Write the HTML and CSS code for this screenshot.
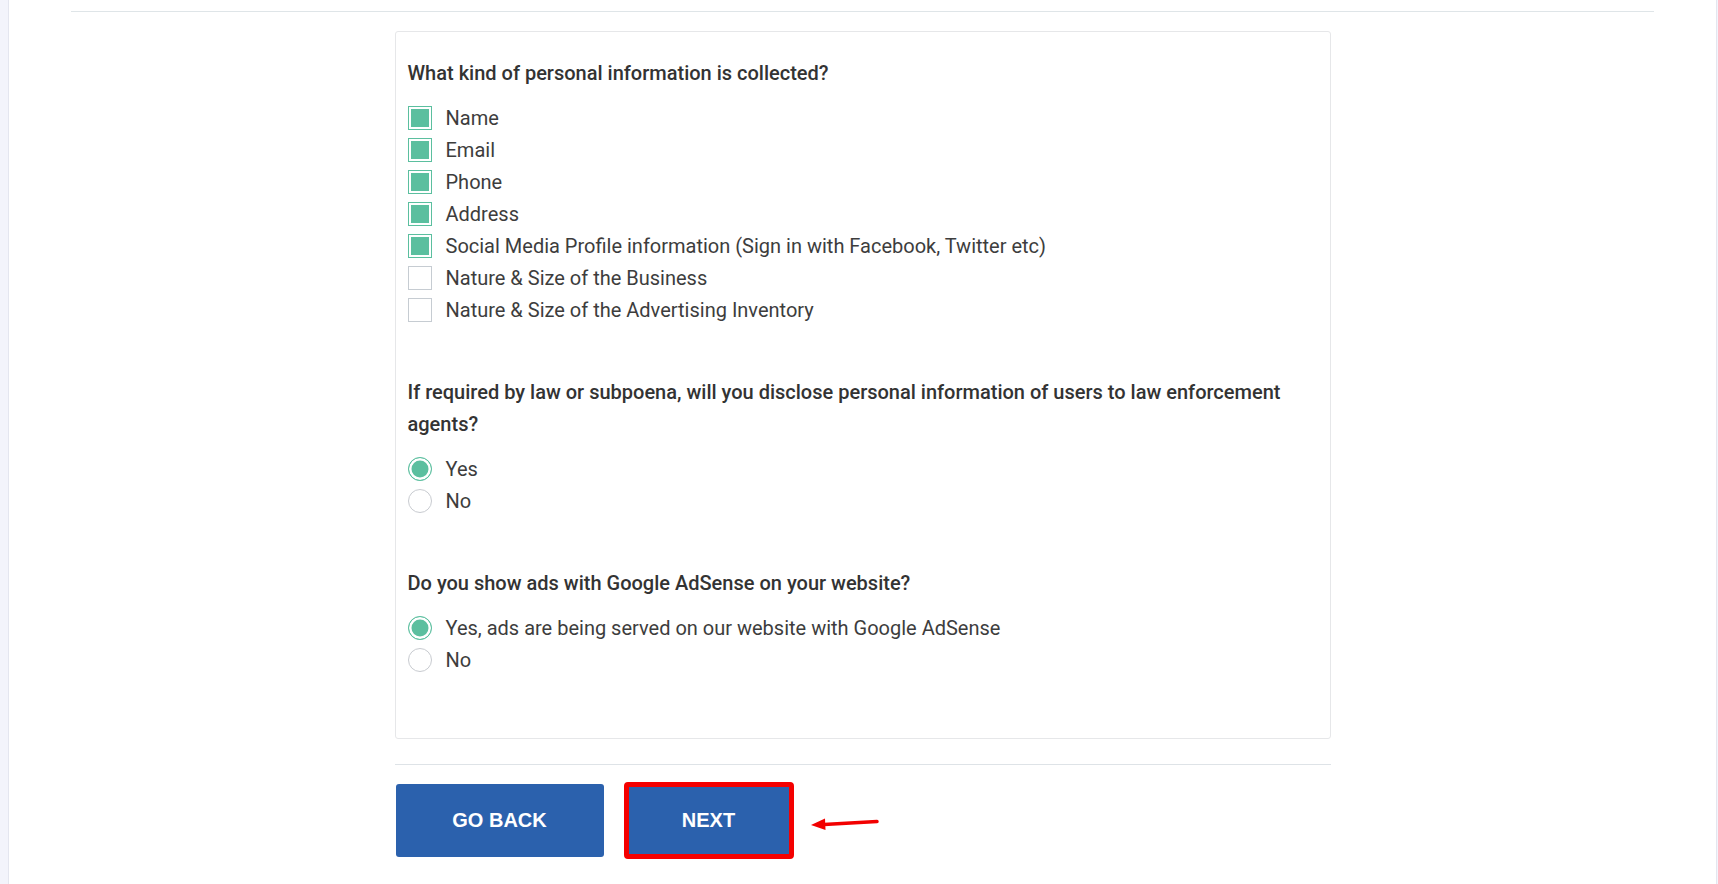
FILE: index.html
```html
<!DOCTYPE html>
<html lang="en">
<head>
<meta charset="utf-8">
<title>Privacy Policy Generator</title>
<link rel="stylesheet" href="styles.css">
</head>
<body>
<div class="page">
  <div class="top-rule"></div>
  <div class="wrap">
    <div class="card">
      <div class="group">
        <div class="question">What kind of personal information is collected?</div>
        <div class="option"><span class="box checked"></span><span class="label">Name</span></div>
        <div class="option"><span class="box checked"></span><span class="label">Email</span></div>
        <div class="option"><span class="box checked"></span><span class="label">Phone</span></div>
        <div class="option"><span class="box checked"></span><span class="label">Address</span></div>
        <div class="option"><span class="box checked"></span><span class="label">Social Media Profile information (Sign in with Facebook, Twitter etc)</span></div>
        <div class="option"><span class="box"></span><span class="label">Nature &amp; Size of the Business</span></div>
        <div class="option"><span class="box"></span><span class="label">Nature &amp; Size of the Advertising Inventory</span></div>
      </div>
      <div class="group">
        <div class="question">If required by law or subpoena, will you disclose personal information of users to law enforcement agents?</div>
        <div class="option"><span class="radio checked"></span><span class="label">Yes</span></div>
        <div class="option"><span class="radio"></span><span class="label">No</span></div>
      </div>
      <div class="group">
        <div class="question">Do you show ads with Google AdSense on your website?</div>
        <div class="option"><span class="radio checked"></span><span class="label">Yes, ads are being served on our website with Google AdSense</span></div>
        <div class="option"><span class="radio"></span><span class="label">No</span></div>
      </div>
    </div>
    <div class="divider"></div>
    <div class="actions">
      <button class="btn">GO BACK</button>
      <button class="btn btn-next">NEXT</button>
      <svg class="arrow" width="70" height="16" viewBox="0 0 70 16">
        <path d="M14 10.5 L67 7.5" stroke="#f20000" stroke-width="3.5" stroke-linecap="round" fill="none"/>
        <path d="M1 11 L15 4.5 L15.5 16 Z" fill="#f20000"/>
      </svg>
    </div>
  </div>
</div>
</body>
</html>
```
FILE: styles.css
```css
html, body {
  margin: 0;
  padding: 0;
}
body {
  background: #f3f4fb;
  font-family: Roboto, "Liberation Sans", Arial, sans-serif;
  color: #333;
}
.page {
  margin: 0 1px 0 8px;
  background: #fff;
  border-left: 1px solid #e4e6ef;
  border-right: 1px solid #e4e6ef;
  min-height: 884px;
  padding: 0 62px;
  box-sizing: border-box;
}
.top-rule {
  height: 11px;
  border-bottom: 1px solid #dfe5e8;
}
.wrap {
  width: 936px;
  margin: 19px auto 0;
}
.card {
  border: 1px solid #e6e7e9;
  border-radius: 3px;
  padding: 25px 12px 12px 12px;
}
.group {
  margin-bottom: 50px;
}
.question {
  font-size: 20px;
  font-weight: 500;
  line-height: 32px;
  color: #333;
  margin-bottom: 13px;
}
.option {
  display: flex;
  align-items: center;
  height: 32px;
}
.label {
  font-size: 20px;
  color: #3d3d3d;
  margin-left: 14px;
}
.box {
  width: 24px;
  height: 24px;
  box-sizing: border-box;
  border: 1px solid #c6ccd2;
  background: #fff;
  flex: none;
}
.box.checked {
  border-color: #5bbf9f;
  background: #5bbf9f;
  box-shadow: inset 0 0 0 2px #fff;
}
.radio {
  width: 24px;
  height: 24px;
  box-sizing: border-box;
  border: 1px solid #c8cbd0;
  border-radius: 50%;
  background: #fff;
  flex: none;
}
.radio.checked {
  border-color: #5bbf9f;
  background: #5bbf9f;
  box-shadow: inset 0 0 0 2.5px #fff;
}
.divider {
  margin-top: 25px;
  border-top: 1px solid #dee3e7;
}
.actions {
  display: flex;
  align-items: center;
  margin-top: 17px;
}
.btn {
  font-family: "Liberation Sans", Arial, sans-serif;
  font-weight: 700;
  font-size: 20px;
  color: #fff;
  background: #2b61ad;
  border: none;
  border-radius: 3px;
  width: 208px;
  height: 73px;
  margin: 0 0 0 1px;
  padding: 0;
}
.btn-next {
  width: 170px;
  height: 77px;
  border: 5px solid #f40000;
  border-radius: 4px;
  margin-left: 20px;
}
.arrow {
  margin-left: 16px;
  margin-top: 2px;
}
```
